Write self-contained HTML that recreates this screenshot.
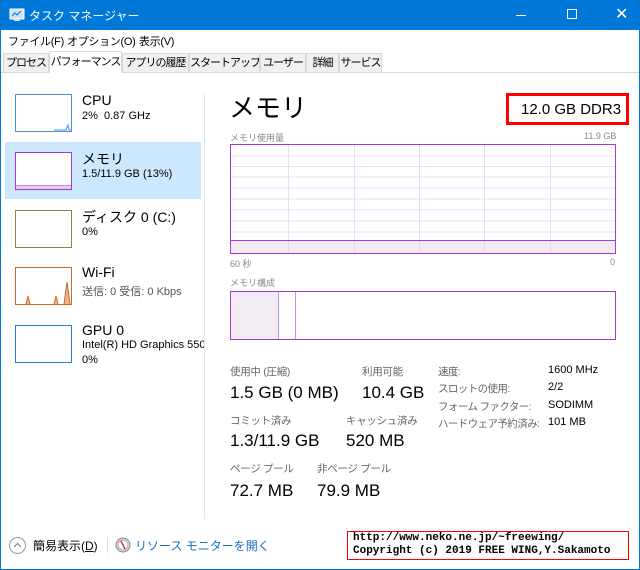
<!DOCTYPE html>
<html><head><meta charset="utf-8"><style>
*{margin:0;padding:0;box-sizing:border-box}
body{width:640px;height:570px;overflow:hidden;background:#fff;font-family:"Liberation Sans","Noto Sans CJK JP",sans-serif;color:#000;position:relative}
.a{position:absolute;white-space:nowrap}
.title{left:0;top:0;width:640px;height:30px;background:#0078d7;color:#fff;font-size:12px}
.tab{position:absolute;top:53px;height:20px;border:1px solid #d9d9d9;background:#f0f0f0;font-size:11px;text-align:center;line-height:18px;white-space:nowrap;overflow:hidden;letter-spacing:-1px}
.thumb{position:absolute;left:15px;width:57px;height:38px;border:1px solid}
.st{font-size:10.5px;color:#666;letter-spacing:-0.3px}
.big{font-size:17px;color:#000}
.g{font-size:9px;color:#888}
.r{font-size:10.5px;color:#666;letter-spacing:-0.6px}
</style></head><body>
<div class="a title">
 <svg class="a" style="left:9px;top:8px" width="16" height="14"><rect x="1" y="1" width="14" height="10" fill="#cfe3f5" stroke="#fff"/><path d="M3 8 L6 5 L8 7 L12 3" stroke="#0078d7" fill="none"/><rect x="5" y="11" width="6" height="2" fill="#ddd"/></svg>
 <span class="a" style="left:29px;top:7px">タスク マネージャー</span>
 <div class="a" style="left:516px;top:15px;width:10px;height:1px;background:#fff"></div>
 <div class="a" style="left:567px;top:9px;width:10px;height:10px;border:1px solid #fff"></div>
 <span class="a" style="left:615px;top:4px;font-size:16px">✕</span>
</div>
<div class="a" style="left:0;top:30px;width:1px;height:540px;background:#0078d7"></div>
<div class="a" style="left:639px;top:30px;width:1px;height:540px;background:#0078d7"></div>
<div class="a" style="left:0;top:569px;width:640px;height:1px;background:#0078d7"></div>
<span class="a" style="left:8px;top:33px;font-size:11px;letter-spacing:-0.3px">ファイル(F)</span>
<span class="a" style="left:67px;top:33px;font-size:11px;letter-spacing:-0.3px">オプション(O)</span>
<span class="a" style="left:139px;top:33px;font-size:11px;letter-spacing:-0.3px">表示(V)</span>
<div class="a" style="left:1px;top:72px;width:638px;height:1px;background:#d9d9d9"></div>
<div class="tab" style="left:3px;width:46px">プロセス</div>
<div class="tab" style="left:49px;width:73px;top:51px;height:22px;background:#fff;border-bottom-color:#fff;line-height:20px">パフォーマンス</div>
<div class="tab" style="left:122px;width:67px">アプリの履歴</div>
<div class="tab" style="left:189px;width:71px">スタートアップ</div>
<div class="tab" style="left:260px;width:46px">ユーザー</div>
<div class="tab" style="left:306px;width:33px">詳細</div>
<div class="tab" style="left:339px;width:43px">サービス</div>

<div class="a" style="left:5px;top:142px;width:196px;height:57px;background:#cce8ff"></div>
<div class="thumb" style="top:94px;border-color:#4a90d9;background:#fff"><svg class="a" style="left:0;top:0" width="55" height="36"><path d="M38 35 L50 35 L52 30 L53 35 L55 35" stroke="#4a90d9" fill="none"/></svg></div>
<span class="a" style="left:82px;top:92px;font-size:14px">CPU</span>
<span class="a" style="left:82px;top:110px;font-size:11px">2%&nbsp; 0.87 GHz</span>
<div class="thumb" style="top:152px;border-color:#a33ad4;background:#fff"><div class="a" style="left:0;bottom:0;width:55px;height:4px;background:#e6c8f0;border-top:1px solid #c78fe0"></div></div>
<span class="a" style="left:82px;top:149px;font-size:14px">メモリ</span>
<span class="a" style="left:82px;top:168px;font-size:11px">1.5/11.9 GB (13%)</span>
<div class="thumb" style="top:210px;border-color:#7f8a3a;background:#fff"></div>
<span class="a" style="left:82px;top:207px;font-size:14px">ディスク 0 (C:)</span>
<span class="a" style="left:82px;top:226px;font-size:11px">0%</span>
<div class="thumb" style="top:267px;border-color:#c76a2a;background:#fff"><svg class="a" style="left:0;top:0" width="55" height="36"><path d="M10 36 L12 28 L14 36 M38 36 L40 28 L42 36 M48 36 L51 14 L54 36" stroke="#c76a2a" fill="#e8b890"/></svg></div>
<span class="a" style="left:82px;top:264px;font-size:14px">Wi-Fi</span>
<span class="a" style="left:82px;top:283px;font-size:11px;color:#555">送信: 0 受信: 0 Kbps</span>
<div class="thumb" style="top:325px;border-color:#2a7fd4;background:#fff"></div>
<span class="a" style="left:82px;top:322px;font-size:14px">GPU 0</span>
<div class="a" style="left:82px;top:339px;width:122px;overflow:hidden;font-size:11px">Intel(R) HD Graphics 5500</div>
<span class="a" style="left:82px;top:354px;font-size:11px">0%</span>
<div class="a" style="left:204px;top:94px;width:1px;height:425px;background:#e5e5e5"></div>

<span class="a" style="left:229px;top:88px;font-size:26px">メモリ</span>
<div class="a" style="left:506px;top:93px;width:123px;height:32px;border:3px solid #f00"></div>
<span class="a" style="left:521px;top:101px;font-size:15px">12.0 GB DDR3</span>
<span class="a g" style="left:230px;top:131px">メモリ使用量</span>
<span class="a g" style="left:584px;top:131px">11.9 GB</span>
<svg class="a" style="left:230px;top:144px" width="386" height="110">
<g stroke="#ecdcf4" stroke-width="1">
<path d="M0 12H386M0 22.5H386M0 33H386M0 44H386M0 55H386M0 66H386M0 77H386M0 88H386"/>
<path d="M58.5 0V110M124.5 0V110M189.5 0V110M254.5 0V110M320.5 0V110"/></g>
<rect x="0.5" y="96" width="385" height="13.5" fill="#f1ecf4" stroke="none"/>
<path d="M58.5 96V110M124.5 96V110M189.5 96V110M254.5 96V110M320.5 96V110" stroke="#ddd"/>
<path d="M0 96.5H386" stroke="#a33ad4"/>
<rect x="0.5" y="0.5" width="385" height="109" fill="none" stroke="#a33ad4"/>
</svg>
<span class="a g" style="left:230px;top:257px">60 秒</span>
<span class="a g" style="left:610px;top:257px">0</span>
<span class="a g" style="left:230px;top:276px">メモリ構成</span>
<svg class="a" style="left:230px;top:291px" width="386" height="49">
<rect x="0" y="0" width="48" height="49" fill="#f1ecf4"/>
<path d="M48.5 0V49M65.5 0V49" stroke="#c78fe0"/>
<rect x="0.5" y="0.5" width="385" height="48" fill="none" stroke="#a33ad4"/>
</svg>

<span class="a st" style="left:230px;top:364px">使用中 (圧縮)</span>
<span class="a big" style="left:230px;top:383px">1.5 GB (0 MB)</span>
<span class="a st" style="left:362px;top:364px">利用可能</span>
<span class="a big" style="left:362px;top:383px">10.4 GB</span>
<span class="a st" style="left:230px;top:413px">コミット済み</span>
<span class="a big" style="left:230px;top:431px">1.3/11.9 GB</span>
<span class="a st" style="left:346px;top:413px">キャッシュ済み</span>
<span class="a big" style="left:346px;top:431px">520 MB</span>
<span class="a st" style="left:230px;top:461px">ページ プール</span>
<span class="a big" style="left:230px;top:481px">72.7 MB</span>
<span class="a st" style="left:317px;top:461px">非ページ プール</span>
<span class="a big" style="left:317px;top:481px">79.9 MB</span>
<span class="a r" style="left:438px;top:364px">速度:</span><span class="a" style="left:548px;top:364px;font-size:11px">1600 MHz</span>
<span class="a r" style="left:438px;top:381px">スロットの使用:</span><span class="a" style="left:548px;top:381px;font-size:11px">2/2</span>
<span class="a r" style="left:438px;top:399px">フォーム ファクター:</span><span class="a" style="left:548px;top:399px;font-size:11px">SODIMM</span>
<span class="a r" style="left:438px;top:416px">ハードウェア予約済み:</span><span class="a" style="left:548px;top:416px;font-size:11px">101 MB</span>

<div class="a" style="left:9px;top:537px;width:17px;height:17px;border:1px solid #999;border-radius:50%"></div>
<svg class="a" style="left:9px;top:537px" width="17" height="17"><path d="M5 10 L8.5 6.5 L12 10" stroke="#777" fill="none"/></svg>
<span class="a" style="left:33px;top:537px;font-size:12px">簡易表示(<u>D</u>)</span>
<div class="a" style="left:107px;top:537px;width:1px;height:16px;background:#ddd"></div>
<svg class="a" style="left:115px;top:537px" width="16" height="16"><circle cx="8" cy="8" r="7" fill="#ddd" stroke="#888"/><circle cx="8" cy="8" r="5" fill="#fff" stroke="#aaa"/><path d="M6 4 L10 12" stroke="#d33" stroke-width="1.5"/></svg>
<span class="a" style="left:135px;top:537px;font-size:12px;color:#1a6fc4">リソース モニターを開く</span>

<div class="a" style="left:347px;top:531px;width:282px;height:29px;border:1px solid #f00;background:#fff"></div>
<span class="a" style="left:353px;top:532px;font-family:'Liberation Mono',monospace;font-size:11px;font-weight:bold;line-height:13px">http://www.neko.ne.jp/~freewing/<br>Copyright (c) 2019 FREE WING,Y.Sakamoto</span>
</body></html>
